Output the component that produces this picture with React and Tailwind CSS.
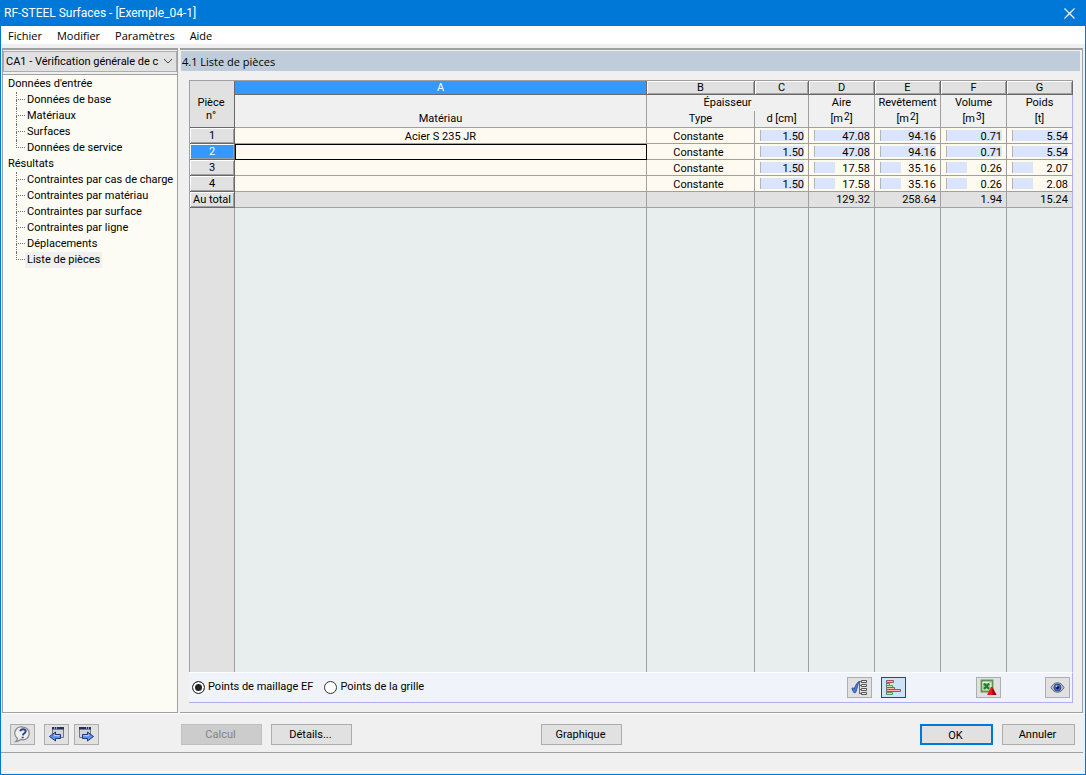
const TREE = [
  {
    title: "Données d'entrée",
    items: ['Données de base', 'Matériaux', 'Surfaces', 'Données de service'],
  },
  {
    title: 'Résultats',
    items: [
      'Contraintes par cas de charge',
      'Contraintes par matériau',
      'Contraintes par surface',
      'Contraintes par ligne',
      'Déplacements',
      'Liste de pièces',
    ],
  },
]

const ROWS = [
  { no: 1, material: 'Acier S 235 JR', type: 'Constante', values: ['1.50', '47.08', '94.16', '0.71', '5.54'] },
  { no: 2, material: '', type: 'Constante', values: ['1.50', '47.08', '94.16', '0.71', '5.54'] },
  { no: 3, material: '', type: 'Constante', values: ['1.50', '17.58', '35.16', '0.26', '2.07'] },
  { no: 4, material: '', type: 'Constante', values: ['1.50', '17.58', '35.16', '0.26', '2.08'] },
]

const MAX = [1.5, 47.08, 94.16, 0.71, 5.54]
const TOTALS = ['', '129.32', '258.64', '1.94', '15.24']
const ACTIVE_ROW = 2

const raised = 'border-r border-b border-[#696969] shadow-[inset_1px_1px_0_#fff,inset_-1px_-1px_0_#a0a0a0]'
const line = 'border-r border-[#a0a0a0] last:border-r-[#b0b0f0]'

const TitleBar = () => (
  <header className="flex h-[26px] items-center justify-between bg-[#0078d7] pl-[3px] pr-2 text-white">
    <h1 className="font-[Roboto,sans-serif] text-[12px] leading-4">RF-STEEL Surfaces - [Exemple_04-1]</h1>
    <button aria-label="Fermer" className="flex size-4 items-center justify-center">
      <svg width="11" height="11" viewBox="0 0 11 11" stroke="#fff" strokeWidth="1.1">
        <path d="M.5.5l10 10M10.5.5l-10 10" />
      </svg>
    </button>
  </header>
)

const MenuBar = () => (
  <nav className="flex h-[18px] items-end gap-[15px] bg-white pl-[7px] font-['Open_Sans',sans-serif] text-[11px] leading-4">
    <button>Fichier</button>
    <button>Modifier</button>
    <button>Paramètres</button>
    <button>Aide</button>
  </nav>
)

const Branch = ({ label, last }) => (
  <li className="flex h-4 items-stretch">
    <span className="flex w-[9px] flex-col">
      <span className="h-2 border-b border-l border-dotted border-[#707070]" />
      {!last && <span className="h-2 border-l border-dotted border-[#707070]" />}
    </span>
    <a
      href="#"
      className={label === 'Liste de pièces' ? 'bg-[#f0f0f0] px-[2px] leading-4' : 'px-[2px] leading-4'}
    >
      {label}
    </a>
  </li>
)

const Sidebar = () => (
  <aside className="flex w-[176px] shrink-0 flex-col border-r border-l border-t-2 border-b border-[#a0a0a0] bg-[#fcfcf4]">
    <div className="relative border-b border-[#a0a0a0] bg-[#f0f0f0] pt-px pb-[2px]">
      <select
        aria-label="Cas de calcul"
        className="block h-[21px] w-full appearance-none border border-[#adadad] bg-[#e1e1e1] pt-px pl-[2px] pr-4 text-[11px]"
      >
        <option>CA1 - Vérification générale de c</option>
      </select>
      <svg className="pointer-events-none absolute top-2 right-1" width="10" height="7" viewBox="0 0 10 7" fill="none" stroke="#444">
        <path d="M1 1l4 4 4-4" />
      </svg>
    </div>
    <div className="whitespace-nowrap pt-px pl-[5px]">
      {TREE.map((group) => (
        <section key={group.title}>
          <h2 className="leading-4">{group.title}</h2>
          <ul className="pl-2">
            {group.items.map((label, i) => (
              <Branch key={label} label={label} last={i === group.items.length - 1} />
            ))}
          </ul>
        </section>
      ))}
    </div>
  </aside>
)

const BarCell = ({ value, max }) => (
  <td className={`${line} border-b border-b-[#a0a0a0] bg-[#fffaf0] pt-[2px] pr-1 pb-0 pl-[5px]`}>
    <div className="grid items-start">
      <span
        className="col-start-1 row-start-1 h-[11px] border-l border-[#b4b4b4] bg-[#d9e5fd]"
        style={{ width: `${(Number(value) / max) * 100}%` }}
      />
      <span className="col-start-1 row-start-1 text-right leading-[13px]">{value}</span>
    </div>
  </td>
)

const Unit = ({ power }) => (
  <>
    [m<span className="ml-px inline-block -translate-y-[2px] text-[10px] leading-none">{power}</span>]
  </>
)

const PartsTable = () => (
  <table className="h-full w-full table-fixed border-separate border-spacing-0 border-t border-l border-[#a0a0a0] leading-[15px]">
    <colgroup>
      <col className="w-[45px]" />
      <col />
      <col className="w-[108px]" />
      <col className="w-[54px]" />
      <col className="w-[66px]" />
      <col className="w-[66px]" />
      <col className="w-[66px]" />
      <col className="w-[66px]" />
    </colgroup>
    <thead className="bg-[#f0f0f0]">
      <tr className="h-[14px]">
        <th rowSpan={3} className="border-r border-b border-[#696969] bg-[#e1e1e1] p-0 pt-[10px] pr-[2px] font-normal leading-[13px]">
          Pièce
          <br />
          n°
        </th>
        <th className="h-[14px] border-r border-b border-[#696969] bg-[#3399ff] p-0 font-normal leading-[13px] text-white">A</th>
        {['B', 'C', 'D', 'E', 'F', 'G'].map((letter) => (
          <th key={letter} className={`${raised} h-[14px] bg-[#e1e1e1] p-0 font-normal leading-[13px]`}>
            {letter}
          </th>
        ))}
      </tr>
      <tr className="h-4 align-top leading-[14px]">
        <th className={`${line} p-0`} />
        <th colSpan={2} className={`${line} p-0 pt-px font-normal`}>Épaisseur</th>
        <th className={`${line} p-0 pt-px font-normal`}>Aire</th>
        <th className={`${line} p-0 pt-px font-normal`}>Revêtement</th>
        <th className={`${line} p-0 pt-px font-normal`}>Volume</th>
        <th className={`${line} p-0 pt-px font-normal`}>Poids</th>
      </tr>
      <tr className="h-[17px] align-top leading-[14px]">
        <th className={`${line} border-b p-0 pt-px font-normal`}>Matériau</th>
        <th className={`${line} border-b p-0 pt-px font-normal`}>Type</th>
        <th className={`${line} border-b p-0 pt-px font-normal`}>d [cm]</th>
        <th className={`${line} border-b p-0 pt-px font-normal`}><Unit power="2" /></th>
        <th className={`${line} border-b p-0 pt-px font-normal`}><Unit power="2" /></th>
        <th className={`${line} border-b p-0 pt-px font-normal`}><Unit power="3" /></th>
        <th className={`${line} border-b p-0 pt-px font-normal`}>[t]</th>
      </tr>
    </thead>
    <tbody>
      {ROWS.map((row) => {
        const active = row.no === ACTIVE_ROW
        return (
          <tr key={row.no} className="h-4">
            <th className={`${raised} p-0 font-normal ${active ? 'bg-[#3399ff] text-white' : 'bg-[#e1e1e1]'}`}>{row.no}</th>
            <td
              className={`border-r border-b border-[#a0a0a0] bg-[#fffaf0] p-0 pt-[2px] text-center leading-[13px] ${active ? 'outline outline-1 -outline-offset-1 outline-black' : ''}`}
            >
              {row.material}
            </td>
            <td className={`${line} border-b bg-[#fffaf0] p-0 pt-[2px] pr-1 text-center leading-[13px]`}>{row.type}</td>
            {row.values.map((value, i) => (
              <BarCell key={i} value={value} max={MAX[i]} />
            ))}
          </tr>
        )
      })}
      <tr className="h-4 bg-[#e1e1e1]">
        <th className={`${raised} p-0 font-normal`}>Au total</th>
        <td className={`${line} border-b p-0`} />
        <td className={`${line} border-b p-0`} />
        {TOTALS.map((total, i) => (
          <td key={i} className={`${line} border-b p-0 pr-1 text-right`}>{total}</td>
        ))}
      </tr>
      <tr className="bg-[#e8eeee]">
        <td className={`${line} bg-[#e1e1e1] p-0`} />
        <td className={`${line} p-0`} />
        <td className={`${line} p-0`} />
        {TOTALS.map((_, i) => (
          <td key={i} className={`${line} p-0`} />
        ))}
      </tr>
    </tbody>
  </table>
)

const Radio = ({ label, ...props }) => (
  <label className="flex items-center gap-[3px]">
    <input
      type="radio"
      name="points"
      className="size-[13px] appearance-none rounded-full border border-[#333] bg-white checked:bg-[#222] checked:shadow-[inset_0_0_0_2px_#fff]"
      {...props}
    />
    {label}
  </label>
)

const IconButton = ({ label, pressed, children }) => (
  <button
    aria-label={label}
    className={`flex h-[21px] w-[25px] items-center justify-center border ${pressed ? 'border-[#005499] bg-[#cce4f7]' : 'border-[#adadad] bg-[#e1e1e1]'}`}
  >
    {children}
  </button>
)

const TreeCheckIcon = () => (
  <svg width="17" height="17" viewBox="0 0 17 17" fill="none">
    <path d="M8.5 2v13M8.500 2.500h2M8.500 6.500h2M8.500 10.500h2M8.500 14.500h2" stroke="#666" />
    <path d="M10.500 1.500h5v2h-5zM10.500 5.500h5v2h-5zM10.500 9.500h5v2h-5zM10.500 13.500h5v2h-5z" fill="#eee" stroke="#555" />
    <path d="M.8 9.500c1-1 2-.7 2.500.6C4 7.500 5 5 7.800 2.500c-1 3.300-1.500 6.500-3 10.700-.7.900-1.800.8-2.200 0z" fill="#4a7fe0" stroke="#29489b" strokeWidth=".9" />
  </svg>
)

const BarsIcon = () => (
  <svg width="17" height="17" viewBox="0 0 17 17" strokeWidth="1">
    <path d="M1.500 1.500h7v2h-7z" fill="#ffb5b5" stroke="#a45252" />
    <path d="M1.500 4.500h3v2h-3zM1.500 6.500h6v2h-6z" fill="#b5f0b5" stroke="#4f9d5d" />
    <path d="M1.500 8.500h8v2h-8zM1.500 10.500h14v2h-14z" fill="#ffb5b5" stroke="#a45252" />
    <path d="M1.500 13.500h6v2h-6z" fill="#b5f0b5" stroke="#4f9d5d" />
    <path d="M1.500 1v15" stroke="#777" />
  </svg>
)

const ExcelIcon = () => (
  <svg width="17" height="17" viewBox="0 0 17 17">
    <path d="M1.500 1.500h11v11h-11z" fill="#f3f8f0" stroke="#5c9552" strokeWidth="1.800" />
    <path d="M9 3.500h3M9 6h3M9 8.500h3" stroke="#a9cba2" />
    <path d="M3 4h7v6.500H3z" fill="#9ccb98" />
    <path d="M4 4.500l5 5.500M9 4.500L4 10" stroke="#257a32" strokeWidth="1.900" />
    <path d="M11 8h1.500l4 8H7z" fill="#e81c1c" />
    <path d="M12 8.500L16.500 16h-4z" fill="#9b0808" />
  </svg>
)

const EyeIcon = () => (
  <svg width="15" height="11" viewBox="0 0 15 11">
    <path d="M1 5.500C3 2 5 .8 7.500.8S12 2 14 5.500C12 9 10 10.200 7.500 10.200S3 9 1 5.500z" fill="#c9c9d4" stroke="#555" strokeWidth=".9" />
    <circle cx="7.500" cy="5.500" r="3.600" fill="#3d62cc" stroke="#273f91" strokeWidth=".8" />
    <circle cx="7.500" cy="5.500" r="1.600" fill="#0b1235" />
    <circle cx="6.500" cy="4.300" r=".9" fill="#c8dcff" />
  </svg>
)

const HelpIcon = () => (
  <svg width="17" height="17" viewBox="0 0 17 17">
    <path d="M9 1.200a6.300 6.300 0 1 1-2.300 12.200C5.500 14.500 4 15.300 1.800 15.500c1.100-.9 1.600-2 1.600-3.200A6.300 6.300 0 0 1 9 1.200z" fill="#efefef" stroke="#8a8a8a" strokeWidth="1.300" />
    <path d="M6.200 5.300c.3-1.300 1.400-2 2.800-2 1.700 0 2.700.9 2.700 2.100 0 1.800-2.500 2-2.800 3.900M8.700 10.700v1.500" fill="none" stroke="#2b4387" strokeWidth="1.900" />
  </svg>
)

// Window with an arrow, shared by the previous / next table buttons.
const StepIcon = ({ next }) => (
  <svg width="17" height="17" viewBox="0 0 17 17">
    <g transform={next ? undefined : 'matrix(-1 0 0 1 17 0)'}>
      <path d="M1.500 1.500h11v10h-11z" fill="#d2d2da" stroke="#77777f" />
      <path d="M1 1h12v2.500H1z" fill="#27325c" />
      <path d="M8 2h1M10 2h1" stroke="#fff" />
      <path d="M4.500 8.500h5v-2.500l6 4.500-6 4.500v-2.500h-5z" fill="#5c8ff0" stroke="#1f3678" />
      <path d="M5.500 9.700h5v-1.200" fill="none" stroke="#c5dbff" />
    </g>
  </svg>
)

const PushButton = ({ children, className = '', ...props }) => (
  <button
    className={`h-[21px] border pt-px pr-[2px] text-center leading-[18px] disabled:border-[#bfbfbf] disabled:bg-[#cccccc] disabled:text-[#838383] ${className}`}
    {...props}
  >
    {children}
  </button>
)

const App = () => {
  return (
    <div className="flex min-h-screen flex-col border-x border-b border-[#0078d7] bg-[#f0f0f0] font-[Roboto,sans-serif] text-[11px] text-black">
      <TitleBar />
      <MenuBar />

      <div className="flex flex-1 gap-[2px] border-b border-white pt-1 pr-[2px] pl-px">
        <Sidebar />
        <main className="flex min-w-0 flex-1 flex-col border-t-2 border-r border-b border-[#a0a0a0]">
          <h2 className="mt-px mr-[2px] ml-px h-5 bg-[#bfcddb] pl-px font-['Open_Sans',sans-serif] leading-[22px]">
            4.1 Liste de pièces
          </h2>
          <div className="m-[9px] flex flex-1 flex-col">
            <div className="grid flex-1">
              <PartsTable />
            </div>
            <div className="flex items-center border-t border-r border-b border-t-white border-r-[#b0b0f0] border-b-[#b0b0f0] bg-[#f0f4fa] py-1 pl-[3px] pr-[2px]">
              <div className="flex gap-[11px]">
                <Radio label="Points de maillage EF" defaultChecked />
                <Radio label="Points de la grille" />
              </div>
              <div className="ml-auto flex gap-[9px]">
                <IconButton label="Sélection">
                  <TreeCheckIcon />
                </IconButton>
                <IconButton label="Barres" pressed>
                  <BarsIcon />
                </IconButton>
              </div>
              <div className="ml-[70px] flex gap-11">
                <IconButton label="Exporter">
                  <ExcelIcon />
                </IconButton>
                <IconButton label="Afficher">
                  <EyeIcon />
                </IconButton>
              </div>
            </div>
          </div>
        </main>
      </div>

      <div className="flex items-center pt-[10px] pr-[10px] pb-[7px] pl-[9px]">
        <IconButton label="Aide">
          <HelpIcon />
        </IconButton>
        <div className="ml-[9px] flex gap-[5px]">
          <IconButton label="Précédent">
            <StepIcon />
          </IconButton>
          <IconButton label="Suivant">
            <StepIcon next />
          </IconButton>
        </div>
        <div className="ml-[82px] flex gap-[9px]">
          <PushButton disabled className="w-[81px]">Calcul</PushButton>
          <PushButton className="w-[81px] border-[#adadad] bg-[#e1e1e1]">Détails...</PushButton>
        </div>
        <PushButton className="ml-[189px] w-[81px] border-[#adadad] bg-[#e1e1e1]">Graphique</PushButton>
        <div className="ml-auto flex gap-[9px]">
          <PushButton className="w-[73px] border-2 border-[#0078d7] bg-[#e1e1e1] leading-4">OK</PushButton>
          <PushButton className="w-[73px] border-[#adadad] bg-[#e1e1e1]">Annuler</PushButton>
        </div>
      </div>
      <footer className="mr-[2px] mb-[2px] h-5 border-t border-b border-t-[#a0a0a0] border-b-white" />
    </div>
  )
}

export default App
